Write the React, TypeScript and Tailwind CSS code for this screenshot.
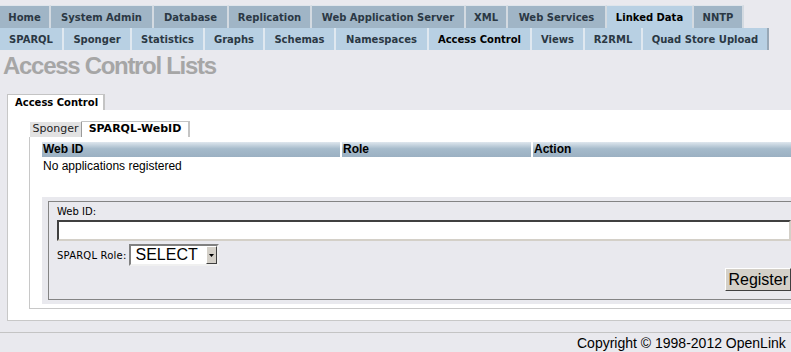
import React from 'react'

const topTabs = [
  { label: 'Home', cls: 'w-[51px]' },
  { label: 'System Admin', cls: 'w-[103px]' },
  { label: 'Database', cls: 'w-[75px]' },
  { label: 'Replication', cls: 'w-[83px]' },
  { label: 'Web Application Server', cls: 'w-[154px]' },
  { label: 'XML', cls: 'w-[42px]' },
  { label: 'Web Services', cls: 'w-[99px]' },
  { label: 'Linked Data', cls: 'w-[87px]', active: true },
  { label: 'NNTP', cls: 'w-[50px]' },
]

const subTabs = [
  { label: 'SPARQL', cls: 'w-[64px]' },
  { label: 'Sponger', cls: 'w-[68px]' },
  { label: 'Statistics', cls: 'w-[73px]' },
  { label: 'Graphs', cls: 'w-[60px]' },
  { label: 'Schemas', cls: 'w-[71px]' },
  { label: 'Namespaces', cls: 'w-[93px]' },
  { label: 'Access Control', cls: 'w-[103px]', active: true },
  { label: 'Views', cls: 'w-[53px]' },
  { label: 'R2RML', cls: 'w-[58px]' },
  { label: 'Quad Store Upload', cls: 'w-[126px]' },
]

const tabFont = "font-['DejaVu_Sans',sans-serif]"
const arial = "font-['Liberation_Sans',Arial,sans-serif]"

const App = () => {
  return (
    <div className="w-[791px] h-[352px] overflow-hidden bg-[#e9e9ee]">
      <div className="w-[840px] pt-[5px]">
        {/* main menu */}
        <div className={`flex h-[23px] text-[10px] font-bold ${tabFont}`}>
          {topTabs.map((t) => (
            <div
              key={t.label}
              className={`${t.cls} flex items-center justify-center border-t border-r-2 border-t-[#dfe5eb] border-r-[#d3dae1] ${
                t.active ? 'bg-[#b8d0e3] text-black' : 'bg-[#a0b5c6] text-[#2b3844]'
              }`}
            >
              {t.label}
            </div>
          ))}
        </div>
        <div className={`flex h-[22px] text-[10px] font-bold ${tabFont}`}>
          {subTabs.map((t, i) => (
            <div
              key={t.label}
              className={`${t.cls} flex items-center justify-center bg-[#b8d0e3] border-r-2 ${
                i === subTabs.length - 1 ? 'border-r-[#98a8b6]' : 'border-r-[#dfe8f0]'
              } ${t.active ? 'text-black' : 'text-[#2b3844]'}`}
            >
              {t.label}
            </div>
          ))}
        </div>

        <h1 className={`pl-[3px] pt-[2px] h-[44px] text-[24px] leading-[28px] font-bold tracking-[-1.3px] text-[#a6a6a6] ${arial}`}>
          Access Control Lists
        </h1>

        {/* page tab */}
        <div className="ml-[7px]">
          <div className={`w-[98px] h-[16px] flex items-center pl-[7px] bg-white border-t border-l border-r-2 border-[#c4c4c4] text-[10px] font-bold text-black ${tabFont}`}>
            Access Control
          </div>
          <div className="bg-white border-l border-b border-[#c8c8c8] pt-[11px] pb-[11px]">
            <div className="ml-[21px]">
              <div className={`flex h-[16px] text-[11px] ${tabFont}`}>
                <div className="w-[53px] flex items-center justify-center bg-[#e2e2e2] border border-b-0 border-t-white border-l-white border-r-[#9a9a9a] text-[#222]">
                  Sponger
                </div>
                <div className="w-[108px] flex items-center justify-center bg-white border-t border-r-2 border-[#c4c4c4] font-bold text-black">
                  SPARQL-WebID
                </div>
              </div>
              <div className="border-l border-b border-[#c8c8c8] pl-[12px] pt-[5px] pb-[4px]">
                <div className={`grid grid-cols-[298px_189px_1fr] gap-x-[2px] h-[15px] text-[12px] leading-[15px] font-bold text-black ${arial}`}>
                  <div className="pl-[1px] bg-[linear-gradient(#dfe7ee,#a6bbcb_45%,#9bb0c2)]">Web ID</div>
                  <div className="pl-[1px] bg-[linear-gradient(#dfe7ee,#a6bbcb_45%,#9bb0c2)]">Role</div>
                  <div className="pl-[1px] bg-[linear-gradient(#dfe7ee,#a6bbcb_45%,#9bb0c2)]">Action</div>
                </div>
                <div className={`h-[18px] pl-[1px] text-[12px] leading-[18px] text-black ${arial}`}>
                  No applications registered
                </div>

                {/* register form */}
                <div className="mt-[22px] w-[770px] bg-[#e9e9ee] pt-[4px] pl-[6px] pb-[4px]">
                  <div className="w-[752px] border border-[#848484] pl-[8px] pr-[8px] pt-[4px] pb-[8px]">
                    <div className={`h-[12px] text-[10px] leading-[12px] text-black ${tabFont}`}>Web ID:</div>
                    <div className="mt-[2px] h-[21px] bg-white border-2 border-t-[#404040] border-l-[#404040] border-b-[#d4d0c8] border-r-[#d4d0c8]" />
                    <div className="mt-[3px] flex items-end gap-[3px]">
                      <span className={`pb-[3px] text-[10px] tracking-[0.2px] text-black ${tabFont}`}>SPARQL Role:</span>
                      <div className="flex h-[22px] w-[90px] bg-white border-2 border-t-[#808080] border-l-[#808080] border-b-[#f0f0f0] border-r-[#f0f0f0]">
                        <span className={`flex-1 pl-[4px] text-[16px] leading-[18px] text-black ${arial}`}>SELECT</span>
                        <span className="w-[11px] flex items-center justify-center bg-[#d4d0c8] border border-t-white border-l-white border-b-[#404040] border-r-[#404040]">
                          <svg width="5" height="3" viewBox="0 0 5 3">
                            <path d="M0 0h5L2.5 3z" fill="#000" />
                          </svg>
                        </span>
                      </div>
                    </div>
                    <div className="mt-[2px] flex justify-end">
                      <button className={`h-[23px] px-[2px] bg-[#d4d0c8] border border-t-white border-l-white border-b-[#404040] border-r-[#404040] text-[16px] leading-[20px] text-black ${arial}`}>
                        Register
                      </button>
                    </div>
                  </div>
                </div>
              </div>
            </div>
          </div>
        </div>

        {/* footer */}
        <div className="mt-[11px] border-t border-[#c4c4c4]">
          <div className={`pl-[577px] pt-[1px] whitespace-nowrap text-[14px] leading-[18px] text-black ${arial}`}>
            Copyright © 1998-2012 OpenLink
          </div>
        </div>
      </div>
    </div>
  )
}

export default App
